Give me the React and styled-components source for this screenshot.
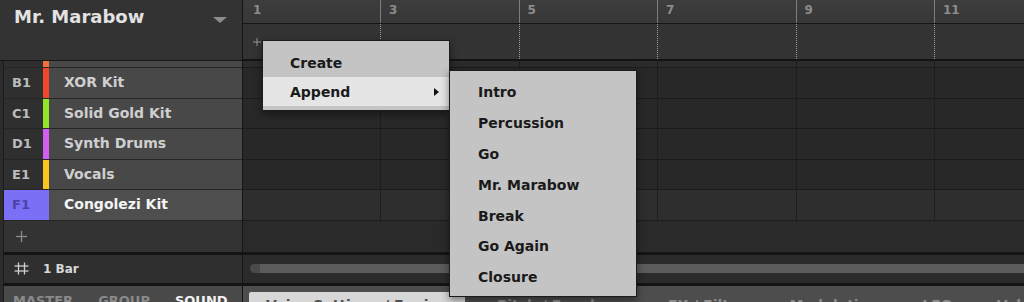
import React from 'react';
import styled, { createGlobalStyle } from 'styled-components';

const GlobalStyle = createGlobalStyle`
  html, body {
    margin: 0;
    padding: 0;
    background: #1a1a1a;
    overflow: hidden;
  }
`;

const tracks = [
  { id: 'B1', name: 'XOR Kit', color: '#f1472d' },
  { id: 'C1', name: 'Solid Gold Kit', color: '#92e528' },
  { id: 'D1', name: 'Synth Drums', color: '#d25ef2' },
  { id: 'E1', name: 'Vocals', color: '#f8c61c' },
  { id: 'F1', name: 'Congolezi Kit', color: '#7b6ff6', selected: true },
];

const bars = ['1', '3', '5', '7', '9', '11'];
const appendItems = ['Intro', 'Percussion', 'Go', 'Mr. Marabow', 'Break', 'Go Again', 'Closure'];
const tabs = ['Voice Settings / Engine', 'Pitch / Envelope', 'FX / Filter', 'Modulation', 'LFO', 'Velocity'];

const HashIcon = () => (
  <svg width="15" height="13" viewBox="0 0 15 13">
    <g stroke="#cfcfcf" strokeWidth="1.3" fill="none">
      <line x1="4.5" y1="0.5" x2="4.5" y2="12.5" />
      <line x1="10.5" y1="0.5" x2="10.5" y2="12.5" />
      <line x1="0.5" y1="4" x2="14.5" y2="4" />
      <line x1="0.5" y1="9" x2="14.5" y2="9" />
    </g>
  </svg>
);

const PlusIcon = ({ size = 11, color = '#8c8c8c' }) => (
  <svg width={size} height={size} viewBox="0 0 11 11">
    <g stroke={color} strokeWidth="1.3">
      <line x1="5.5" y1="0" x2="5.5" y2="11" />
      <line x1="0" y1="5.5" x2="11" y2="5.5" />
    </g>
  </svg>
);

const App = () => {
  return (
    <>
      <GlobalStyle />
      <Screen>
        <Sidebar>
          <Header>
            <Title>Mr. Marabow</Title>
            <DropArrow />
          </Header>
          <PartialTrack>
            <TrackLabel />
            <Stripe $color="#f2703a" />
            <TrackName />
          </PartialTrack>
          {tracks.map((t) => (
            <Track key={t.id} $selected={t.selected}>
              <TrackLabel $selected={t.selected} $color={t.color}>{t.id}</TrackLabel>
              <Stripe $color={t.color} />
              <TrackName $selected={t.selected}>{t.name}</TrackName>
            </Track>
          ))}
          <AddRow>
            <PlusIcon />
          </AddRow>
          <BarRow>
            <HashIcon />
            <BarText>1 Bar</BarText>
          </BarRow>
          <SideTabs>
            <SideTab>MASTER</SideTab>
            <SideTab>GROUP</SideTab>
            <SideTab $active>SOUND</SideTab>
          </SideTabs>
        </Sidebar>

        <Main>
          <Ruler>
            {bars.map((b, i) => (
              <RulerCell key={b} $first={i === 0}>{b}</RulerCell>
            ))}
          </Ruler>
          <PatternRow>
            {bars.map((b, i) => (
              <PatternCell key={b} $first={i === 0}>
                {i === 0 && <PlusIcon size={8} color="#9a9a9a" />}
              </PatternCell>
            ))}
          </PatternRow>
          <PartialLane>
            {bars.map((b, i) => (
              <LaneCell key={b} $first={i === 0} />
            ))}
          </PartialLane>
          {tracks.map((t) => (
            <Lane key={t.id} $selected={t.selected}>
              {bars.map((b, i) => (
                <LaneCell key={b} $first={i === 0} />
              ))}
            </Lane>
          ))}
          <AddLane />
          <ScrollRow>
            <ScrollTrack>
              <ScrollThumb />
            </ScrollTrack>
          </ScrollRow>
          <PageTabs>
            {tabs.map((t, i) => (
              <PageTab key={t} $active={i === 0}>{t}</PageTab>
            ))}
          </PageTabs>
        </Main>

        <Menu>
          <MenuItem>Create</MenuItem>
          <MenuItem $hover>
            Append
            <SubArrow />
          </MenuItem>
        </Menu>
        <SubMenu>
          {appendItems.map((item) => (
            <SubMenuItem key={item}>{item}</SubMenuItem>
          ))}
        </SubMenu>
      </Screen>
    </>
  );
};

export default App;

const Screen = styled.div`
  position: relative;
  display: flex;
  width: 1024px;
  height: 302px;
  overflow: hidden;
  background: #1a1a1a;
  font-family: 'DejaVu Sans', 'Liberation Sans', sans-serif;
  font-weight: 700;
`;

const Sidebar = styled.div`
  display: flex;
  flex-direction: column;
  width: 242px;
  flex-shrink: 0;
  border-right: 1px solid #151515;
  background: #2c2c2c;
  overflow: hidden;

  & > * {
    flex-shrink: 0;
  }
`;

const Header = styled.div`
  display: flex;
  justify-content: space-between;
  height: 60px;
  padding: 5px 15px 0 14px;
  box-sizing: border-box;
  border-bottom: 1px solid #171717;
  height: 61px;
  background: #333333;
`;

const Title = styled.div`
  font-size: 18px;
  line-height: 24px;
  color: #e2e2e2;
`;

const DropArrow = styled.div`
  width: 0;
  height: 0;
  margin-top: 12px;
  border-left: 7px solid transparent;
  border-right: 7px solid transparent;
  border-top: 6px solid #8d8d8d;
`;

const TrackBase = styled.div`
  display: flex;
  margin-left: 3px;
  border-left: 1px solid #1b1b1b;
  border-bottom: 1px solid #262626;
`;

const PartialTrack = styled(TrackBase)`
  height: 6px;
`;

const Track = styled(TrackBase)`
  height: 29.6px;
`;

const TrackLabel = styled.div`
  width: ${(p) => (p.$selected ? '45px' : '39px')};
  flex-shrink: 0;
  padding-left: 8px;
  box-sizing: border-box;
  background: ${(p) => (p.$selected ? p.$color : '#2f2f2f')};
  color: ${(p) => (p.$selected ? '#4a43a6' : '#bcbcbc')};
  font-size: 13px;
  line-height: 29px;
  margin-right: ${(p) => (p.$selected ? '-6px' : '0')};
  position: relative;
  z-index: 1;
`;

const Stripe = styled.div`
  width: 6px;
  flex-shrink: 0;
  background: ${(p) => p.$color};
`;

const TrackName = styled.div`
  flex: 1;
  padding-left: 15px;
  background: ${(p) => (p.$selected ? '#4e4e4e' : '#484848')};
  color: ${(p) => (p.$selected ? '#f4f4f4' : '#cfcfcf')};
  font-size: 14px;
  line-height: 29px;
  white-space: nowrap;
`;

const AddRow = styled.div`
  display: flex;
  align-items: center;
  height: 31px;
  margin-left: 3px;
  padding-left: 12px;
  border-left: 1px solid #1b1b1b;
  border-bottom: 3px solid #141414;
  background: #333333;
`;

const BarRow = styled.div`
  display: flex;
  align-items: center;
  gap: 14px;
  height: 28px;
  margin-left: 3px;
  padding-left: 10px;
  border-left: 1px solid #1b1b1b;
  border-bottom: 3px solid #141414;
  background: #2f2f2f;
`;

const BarText = styled.span`
  font-size: 12px;
  color: #d8d8d8;
`;

const SideTabs = styled.div`
  display: flex;
  gap: 25px;
  height: 30px;
  margin-left: 3px;
  padding: 7px 0 0 9px;
  border-left: 1px solid #1b1b1b;
  background: #494949;
`;

const SideTab = styled.span`
  font-size: 13px;
  line-height: 16px;
  color: ${(p) => (p.$active ? '#f2f2f2' : '#8a8a8a')};
`;

const Main = styled.div`
  display: flex;
  flex-direction: column;
  flex: 1;
  min-width: 0;
  overflow: hidden;

  & > * {
    flex-shrink: 0;
  }
`;

const Ruler = styled.div`
  display: flex;
  height: 23px;
  border-bottom: 1px solid #161616;
  background: linear-gradient(#3d3d3d, #373737);
`;

const RulerCell = styled.div`
  width: ${(p) => (p.$first ? '137px' : '138.5px')};
  flex-shrink: 0;
  padding-left: ${(p) => (p.$first ? '10px' : '8px')};
  box-sizing: border-box;
  border-left: ${(p) => (p.$first ? 'none' : '1px solid #7e7e7e')};
  font-size: 12px;
  line-height: 21px;
  color: #8c8c8c;
`;

const PatternRow = styled.div`
  display: flex;
  height: 35px;
  border-bottom: 2px solid #141414;
  background: #333333;
`;

const PatternCell = styled.div`
  display: flex;
  align-items: center;
  width: ${(p) => (p.$first ? '137px' : '138.5px')};
  flex-shrink: 0;
  padding-left: 10px;
  box-sizing: border-box;
  border-left: ${(p) => (p.$first ? 'none' : '1px dotted #9a9a9a')};
`;

const LaneBase = styled.div`
  display: flex;
  border-bottom: 1px solid #1b1b1b;
`;

const PartialLane = styled(LaneBase)`
  height: 6px;
  background: #2b2b2b;
`;

const Lane = styled(LaneBase)`
  height: 29.6px;
  background: ${(p) => (p.$selected ? '#2e2e2e' : '#282828')};
`;

const LaneCell = styled.div`
  width: ${(p) => (p.$first ? '137px' : '138.5px')};
  flex-shrink: 0;
  box-sizing: border-box;
  border-left: ${(p) => (p.$first ? 'none' : '1px solid #1e1e1e')};
`;

const AddLane = styled.div`
  height: 31px;
  border-bottom: 3px solid #141414;
  background: #2a2a2a;
`;

const ScrollRow = styled.div`
  display: flex;
  align-items: center;
  height: 28px;
  padding-left: 7px;
  border-bottom: 3px solid #141414;
  background: #2b2b2b;
`;

const ScrollTrack = styled.div`
  display: flex;
  flex: 1;
  height: 9px;
  border-radius: 5px 0 0 5px;
  background: #4a4a4a;
`;

const ScrollThumb = styled.div`
  flex: 1;
  margin-left: 10px;
  background: #5c5c5c;
`;

const PageTabs = styled.div`
  display: flex;
  height: 30px;
  padding: 6px 0 0 6px;
  background: #4d4d4d;
  white-space: nowrap;
`;

const PageTab = styled.div`
  padding: ${(p) => (p.$active ? '4px 17px 0' : '4px 22px 0')};
  margin-right: ${(p) => (p.$active ? '10px' : '0')};
  border-radius: 2px 2px 0 0;
  background: ${(p) => (p.$active ? '#d7d7d7' : 'transparent')};
  color: ${(p) => (p.$active ? '#505050' : '#8c8c8c')};
  font-size: 14px;
  line-height: 18px;
`;

const Menu = styled.div`
  position: absolute;
  left: 262px;
  top: 40px;
  width: 186px;
  padding: 7px 0 4px;
  border: 1px solid #1c1c1c;
  background: #c4c4c4;
  box-shadow: 0 3px 8px rgba(0, 0, 0, 0.45);
  z-index: 2;
`;

const MenuItem = styled.div`
  display: flex;
  align-items: center;
  justify-content: space-between;
  height: 29px;
  padding: 0 10px 0 27px;
  background: ${(p) => (p.$hover ? '#e5e5e5' : 'transparent')};
  color: #1a1a1a;
  font-size: 14px;
`;

const SubArrow = styled.span`
  width: 0;
  height: 0;
  border-top: 4px solid transparent;
  border-bottom: 4px solid transparent;
  border-left: 5px solid #111111;
`;

const SubMenu = styled.div`
  position: absolute;
  left: 449px;
  top: 70px;
  width: 186px;
  padding: 6px 0 3px;
  border: 1px solid #1c1c1c;
  background: #c4c4c4;
  box-shadow: 0 3px 8px rgba(0, 0, 0, 0.45);
  z-index: 3;
`;

const SubMenuItem = styled.div`
  display: flex;
  align-items: center;
  height: 30.8px;
  padding-left: 28px;
  color: #1a1a1a;
  font-size: 14px;
  white-space: nowrap;
`;
